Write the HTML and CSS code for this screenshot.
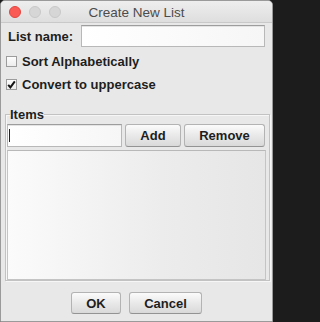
FILE: index.html
```html
<!DOCTYPE html>
<html>
<head>
<meta charset="utf-8">
<title>Create New List</title>
<link rel="stylesheet" href="styles.css">
</head>
<body>
<div class="window">
  <div class="titlebar">
    <div class="lights">
      <span class="light close"></span>
      <span class="light"></span>
      <span class="light"></span>
    </div>
    <div class="title">Create New List</div>
    <div></div>
  </div>
  <div class="name-row">
    <span class="label">List name:</span>
    <div class="field name-field"></div>
  </div>
  <div class="check-row">
    <span class="checkbox"></span>
    <span class="label">Sort Alphabetically</span>
  </div>
  <div class="check-row">
    <span class="checkbox checked"><svg width="9" height="9" viewBox="0 0 9 9"><path d="M1.2 4.8 L3.4 7.4 L7.8 1.4" fill="none" stroke="#151515" stroke-width="2"/></svg></span>
    <span class="label">Convert to uppercase</span>
  </div>
  <fieldset class="group">
    <legend class="label">Items</legend>
    <div class="items-row">
      <div class="field item-field"><span class="caret"></span></div>
      <button class="btn add">Add</button>
      <button class="btn remove">Remove</button>
    </div>
    <div class="list"></div>
  </fieldset>
  <div class="actions">
    <button class="btn ok">OK</button>
    <button class="btn cancel">Cancel</button>
  </div>
</div>
</body>
</html>
```
FILE: styles.css
```css
html, body {
  margin: 0;
  padding: 0;
  background: #1c1c1c;
}
body {
  width: 273px;
  height: 322px;
  overflow: hidden;
  font-family: "Liberation Sans", Arial, sans-serif;
}
.window {
  box-sizing: border-box;
  width: 273px;
  height: 322px;
  border: 1px solid #9a9a9a;
  border-radius: 5px 5px 0 0;
  background: #e8e8e8;
  display: flex;
  flex-direction: column;
  overflow: hidden;
}
.titlebar {
  flex: none;
  height: 21px;
  display: grid;
  grid-template-columns: 1fr auto 1fr;
  align-items: center;
  background: linear-gradient(#eeeeee, #dedede);
  border-bottom: 1px solid #c9c9c9;
}
.lights {
  display: flex;
  gap: 8px;
  padding-left: 8px;
}
.light {
  box-sizing: border-box;
  width: 12px;
  height: 12px;
  border-radius: 50%;
  background: #d6d6d6;
  border: 1px solid #c8c8c8;
}
.light.close {
  background: #fb5b55;
  border-color: #e2453f;
}
.title {
  font-size: 13.5px;
  color: #4c4c4c;
  padding-top: 1px;
}
.label {
  font-size: 13px;
  font-weight: bold;
  color: #1e1e1e;
  white-space: nowrap;
}
.name-row {
  display: flex;
  align-items: center;
  gap: 8px;
  margin-top: 2px;
  padding: 0 7px;
  height: 22px;
}
.field {
  box-sizing: border-box;
  height: 22px;
  background: linear-gradient(to right, #ffffff, #f6f6f6);
  border: 1px solid #b8b8b8;
  border-top-color: #9d9d9d;
  box-shadow: inset 0 1px 0 #e4e4e4;
}
.name-field {
  flex: 1;
}
.check-row {
  display: flex;
  align-items: center;
  gap: 5px;
  height: 23px;
  padding-left: 5px;
}
.name-row + .check-row {
  margin-top: 3px;
}
.checkbox {
  box-sizing: border-box;
  width: 11px;
  height: 11px;
  border: 1px solid #9c9c9c;
  background: linear-gradient(#fdfdfd, #ececec);
  display: flex;
  align-items: center;
  justify-content: center;
}
.group {
  margin: 11px 2px 0 4px;
  padding: 2px 2px 0 1px;
  min-width: 0;
  border: 1px solid #c2c2c2;
  box-shadow: 1px 1px 0 #f6f6f6, inset 1px 1px 0 #f6f6f6;
}
.group legend {
  padding: 0;
  margin-left: 3px;
  line-height: 15px;
}
.items-row {
  display: flex;
  gap: 3px;
  height: 23px;
}
.item-field {
  width: 115px;
  height: 23px;
  position: relative;
}
.caret {
  position: absolute;
  left: 1px;
  top: 4px;
  width: 1px;
  height: 13px;
  background: #222;
}
.btn {
  box-sizing: border-box;
  height: 23px;
  padding: 0;
  font-family: "Liberation Sans", Arial, sans-serif;
  font-size: 13px;
  font-weight: bold;
  color: #1e1e1e;
  background: linear-gradient(#fbfbfb, #e9e9e9 50%, #d9d9d9);
  border: 1px solid #b3b3b3;
  border-bottom-color: #939393;
  border-radius: 3px;
}
.add {
  width: 56px;
}
.remove {
  width: 81px;
}
.list {
  box-sizing: border-box;
  height: 130px;
  margin-top: 3px;
  margin-right: 1px;
  background: linear-gradient(to right, #fbfbfb, #ececec 60%, #e6e6e6);
  border: 1px solid #c4c4c4;
  border-top-color: #b8b8b8;
}
.actions {
  display: flex;
  justify-content: center;
  gap: 8px;
  margin-top: 11px;
}
.ok {
  width: 50px;
  height: 22px;
}
.cancel {
  width: 73px;
  height: 22px;
}
```
